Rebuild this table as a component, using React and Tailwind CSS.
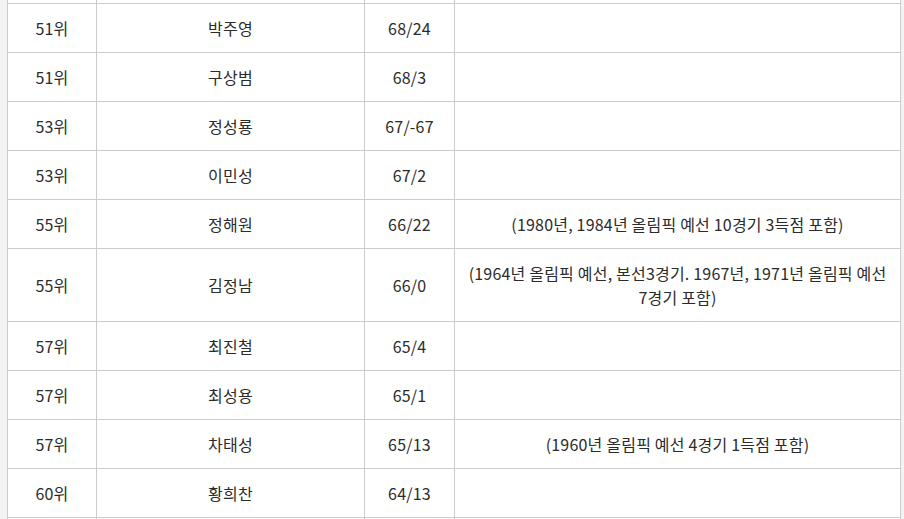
const rows = [
  ["51위", "박주영", "68/24", ""],
  ["51위", "구상범", "68/3", ""],
  ["53위", "정성룡", "67/-67", ""],
  ["53위", "이민성", "67/2", ""],
  ["55위", "정해원", "66/22", "(1980년, 1984년 올림픽 예선 10경기 3득점 포함)"],
  ["55위", "김정남", "66/0", "(1964년 올림픽 예선, 본선3경기. 1967년, 1971년 올림픽 예선 7경기 포함)"],
  ["57위", "최진철", "65/4", ""],
  ["57위", "최성용", "65/1", ""],
  ["57위", "차태성", "65/13", "(1960년 올림픽 예선 4경기 1득점 포함)"],
  ["60위", "황희찬", "64/13", ""],
  ["", "", "", ""],
];

const cell = "h-[49px] border border-[#cccccc] px-[10px] py-[12px] text-center align-middle break-keep";

export default function App() {
  return (
    <div className="flex h-[519px] w-[904px] overflow-hidden bg-white font-['Noto_Sans_CJK_KR','Noto_Sans',sans-serif] text-[16px] leading-[24px] tracking-[0.2px] text-[#2b2b2b]">
      <div className="w-[7px] shrink-0 bg-[#f3f3f3]" />
      <table className="w-[894px] shrink-0 table-fixed border-collapse">
        <colgroup>
          <col className="w-[89px]" />
          <col className="w-[268px]" />
          <col className="w-[90px]" />
          <col />
        </colgroup>
        <tbody>
          <tr className="h-[3px]">
            <td className="border-x border-[#cccccc] p-0" />
            <td className="border-x border-[#cccccc] p-0" />
            <td className="border-x border-[#cccccc] p-0" />
            <td className="border-x border-[#cccccc] p-0" />
          </tr>
          {rows.map((r, i) => (
            <tr key={i}>
              {r.map((c, j) => (
                <td key={j} className={cell}>
                  {c}
                </td>
              ))}
            </tr>
          ))}
        </tbody>
      </table>
      <div className="w-[3px] shrink-0 bg-[#f3f3f3]" />
    </div>
  );
}
